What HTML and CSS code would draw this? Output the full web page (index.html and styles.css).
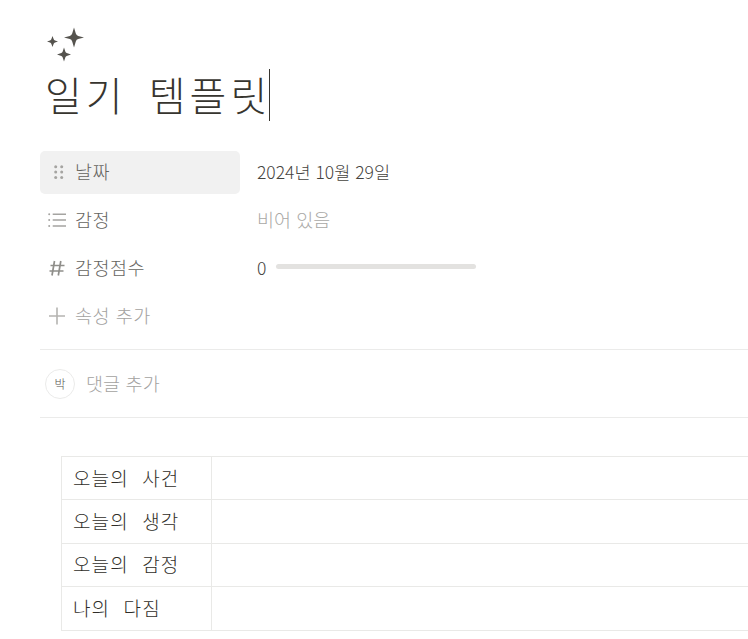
FILE: index.html
```html
<!DOCTYPE html>
<html lang="ko">
<head>
<meta charset="utf-8">
<title>일기 템플릿</title>
<link rel="stylesheet" href="styles.css">
</head>
<body>
<main class="page">
  <svg class="page-icon" viewBox="0 0 40 36" width="40" height="36">
    <path d="M29 0.500 L30.800 6.500 Q31.400 8.400 33.200 8.900 L39 10.500 L33.200 12.100 Q31.400 12.600 30.800 14.500 L29 20.500 L27.200 14.500 Q26.600 12.600 24.800 12.100 L19 10.500 L24.800 8.900 Q26.600 8.400 27.200 6.500 Z"/>
    <path d="M7.500 9 L8.700 12.300 Q9.100 13.200 10 13.500 L13 14.500 L10 15.500 Q9.100 15.800 8.700 16.700 L7.500 20 L6.300 16.700 Q5.900 15.800 5 15.500 L2 14.500 L5 13.500 Q5.900 13.200 6.300 12.300 Z"/>
    <path d="M19 20.500 L20.400 24.800 Q20.800 25.700 21.700 26.100 L26 27.500 L21.700 28.900 Q20.800 29.300 20.400 30.200 L19 34.500 L17.600 30.200 Q17.200 29.300 16.300 28.900 L12 27.500 L16.300 26.100 Q17.200 25.700 17.600 24.800 Z"/>
  </svg>
  <h1 class="title"><span>일기 템플릿</span><i class="caret"></i></h1>

  <section class="props">
    <div class="prop">
      <div class="prop-name hover">
        <svg class="prop-icon" viewBox="0 0 20 20" width="20" height="20"><g class="dots"><circle cx="7.700" cy="4.700" r="1.500"/><circle cx="13.700" cy="4.700" r="1.500"/><circle cx="7.700" cy="10" r="1.500"/><circle cx="13.700" cy="10" r="1.500"/><circle cx="7.700" cy="15.500" r="1.500"/><circle cx="13.700" cy="15.500" r="1.500"/></g></svg>
        <span>날짜</span>
      </div>
      <div class="prop-value">2024년 10월 29일</div>
    </div>
    <div class="prop">
      <div class="prop-name">
        <svg class="prop-icon" viewBox="0 0 20 20" width="20" height="20"><g class="lines"><path d="M4.700 4.300H18M4.700 10H18M4.700 16H18"/></g><g class="dots"><circle cx="1.200" cy="4.300" r="1"/><circle cx="1.200" cy="10" r="1"/><circle cx="1.200" cy="16" r="1"/></g></svg>
        <span>감정</span>
      </div>
      <div class="prop-value empty">비어 있음</div>
    </div>
    <div class="prop">
      <div class="prop-name">
        <svg class="prop-icon" viewBox="0 0 20 20" width="20" height="20"><g class="lines hash"><path d="M6.500 3L4 17.500M12.800 3L10.300 17.500M2.500 7.500H16.500M1.500 13H15.500"/></g></svg>
        <span>감정점수</span>
      </div>
      <div class="prop-value number"><span>0</span><div class="bar"></div></div>
    </div>
    <div class="prop">
      <div class="prop-name muted">
        <svg class="prop-icon" viewBox="0 0 20 20" width="20" height="20"><g class="lines add"><path d="M9 1.500V18.500M1 10H17"/></g></svg>
        <span>속성 추가</span>
      </div>
    </div>
  </section>

  <section class="comments">
    <div class="avatar">박</div>
    <div class="comment-input">댓글 추가</div>
  </section>

  <table class="table">
    <tbody>
      <tr><td class="label">오늘의 사건</td><td></td></tr>
      <tr><td class="label">오늘의 생각</td><td></td></tr>
      <tr><td class="label">오늘의 감정</td><td></td></tr>
      <tr><td class="label">나의 다짐</td><td></td></tr>
    </tbody>
  </table>
</main>
</body>
</html>
```

FILE: styles.css
```css
* { box-sizing: border-box; }
html, body { margin: 0; padding: 0; background: #fff; overflow: hidden; }
body {
  width: 748px;
  height: 639px;
  font-family: "Noto Sans CJK KR", "Noto Sans", sans-serif;
  font-weight: 300;
  color: #37352f;
}
.page { padding: 27px 0 0 40px; }
.page-icon { display: block; margin-left: 5px; fill: #55534e; }
.title {
  display: flex;
  margin: 6px 0 0 5px;
  height: 52px;
  font-size: 40px;
  line-height: 50px;
  font-weight: 300;
  letter-spacing: 4px;
  word-spacing: 7px;
  white-space: pre;
  color: #37352f;
}
.caret { display: block; width: 1px; height: 52px; background: #37352f; margin-left: -2px; }
.props { margin-top: 29px; display: flex; flex-direction: column; gap: 4px; }
.prop { display: flex; height: 44px; align-items: center; }
.prop-name {
  width: 200px;
  height: 43px;
  display: flex;
  align-items: center;
  gap: 7px;
  padding-left: 8px;
  font-size: 18.500px;
  letter-spacing: 0.500px;
  color: #65645f;
  border-radius: 5px;
}
.prop-name span { padding-bottom: 2px; }
.prop-name.hover { background: #f1f1f1; }
.prop-name.muted { color: #a3a29f; }
.prop-icon { flex: none; }
.dots { fill: #a5a4a1; }
.lines { fill: none; stroke: #a5a4a1; stroke-width: 1.500; }
.lines.hash { stroke: #8f8e8a; stroke-width: 1.700; }
.lines.add { stroke: #b5b4b1; stroke-width: 1.600; }
.prop-value {
  margin-left: 17px;
  padding-bottom: 2px;
  font-size: 17.500px;
  color: #45433e;
}
.prop-value.empty { color: #a9a8a5; font-size: 18.500px; letter-spacing: 0; }
.prop-value.number { display: flex; align-items: center; gap: 10px; }
.bar { width: 200px; height: 5px; border-radius: 3px; background: #e3e2e0; margin-top: -1px; }
.comments {
  margin-top: 11px;
  height: 69px;
  border-top: 1px solid #ebebea;
  border-bottom: 1px solid #ebebea;
  display: flex;
  align-items: center;
  padding-left: 5px;
  gap: 11px;
  width: 708px;
}
.avatar {
  width: 30px;
  height: 30px;
  border: 1px solid #ebebea;
  border-radius: 50%;
  display: flex;
  align-items: center;
  justify-content: center;
  font-size: 12px;
  font-weight: 300;
  color: #55534e;
}
.comment-input { padding-bottom: 2px; font-size: 18.500px; letter-spacing: 0.100px; color: #a3a29f; }
.table {
  margin: 38px 0 0 21px;
  width: 687px;
  border-collapse: collapse;
  table-layout: fixed;
}
.table td { border: 1px solid #e9e9e7; height: 43.400px; padding: 0 0 2px 11px; }
.table tr td:last-child { border-right: 0; }
.label {
  width: 150px;
  font-size: 19px;
  letter-spacing: 1.100px;
  word-spacing: 7px;
  color: #2f2d28;
  white-space: nowrap;
}
```
